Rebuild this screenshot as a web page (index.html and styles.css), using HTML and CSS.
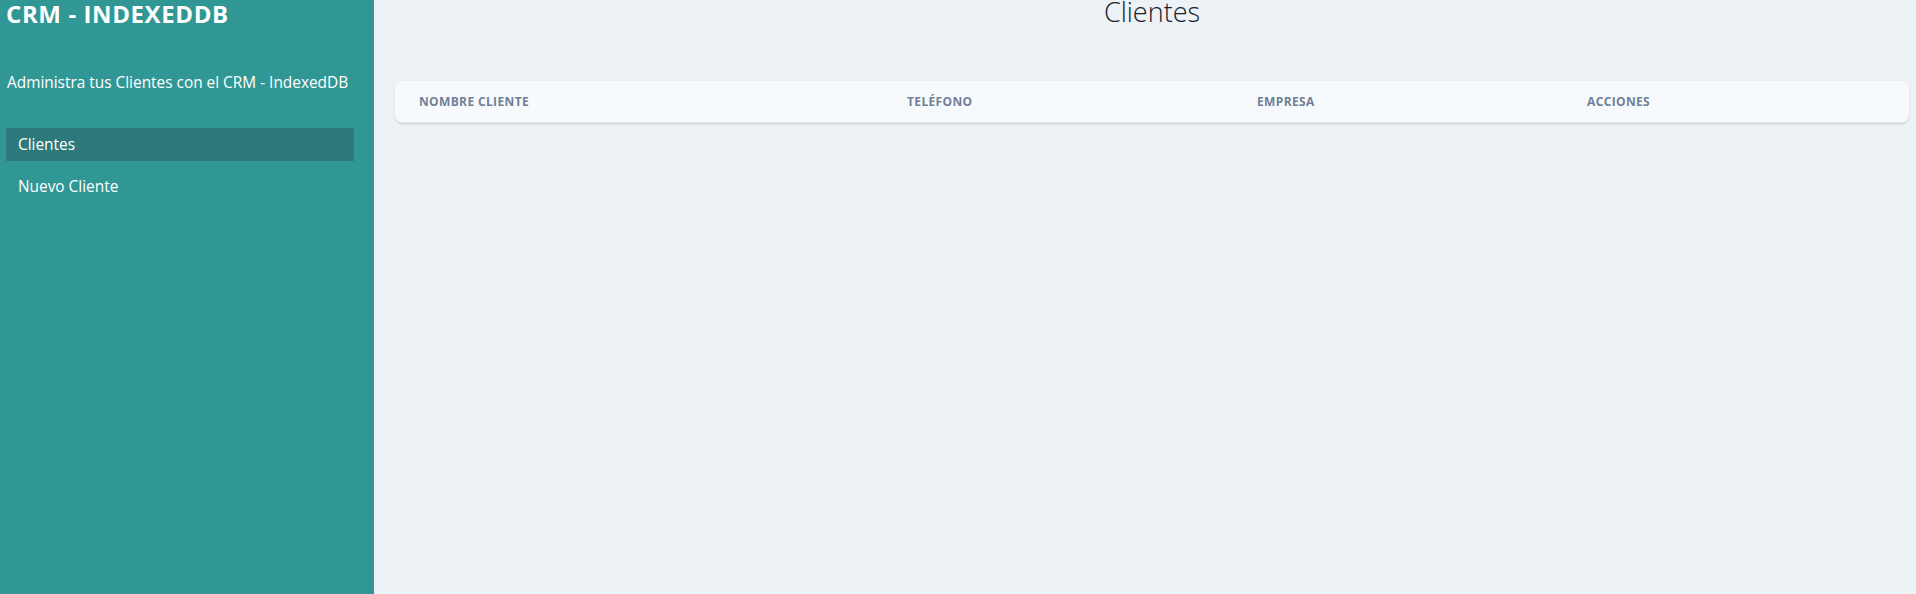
FILE: index.html
```html
<!DOCTYPE html>
<html lang="es">
<head>
<meta charset="utf-8">
<title>CRM - IndexedDB</title>
<link rel="stylesheet" href="styles.css">
</head>
<body>
<div class="layout">
  <aside class="sidebar">
    <h2 class="brand">CRM - IndexedDB</h2>
    <p class="tagline">Administra tus Clientes con el CRM - IndexedDB</p>
    <nav class="nav">
      <a href="#" class="nav-link active">Clientes</a>
      <a href="#" class="nav-link">Nuevo Cliente</a>
    </nav>
  </aside>
  <main class="main">
    <h2 class="page-title">Clientes</h2>
    <div class="table-card">
      <table class="table">
        <colgroup>
          <col class="col-name">
          <col class="col-phone">
          <col class="col-company">
          <col class="col-actions">
        </colgroup>
        <thead class="thead">
          <tr>
            <th class="th">Nombre Cliente</th>
            <th class="th">Teléfono</th>
            <th class="th">Empresa</th>
            <th class="th">Acciones</th>
          </tr>
        </thead>
        <tbody></tbody>
      </table>
    </div>
  </main>
</div>
</body>
</html>
```
FILE: styles.css
```css
* { box-sizing: border-box; }
html, body { margin: 0; padding: 0; }
body {
  font-family: "Open Sans", "Noto Sans", sans-serif;
  color: #1a202c;
  background: #edf2f7;
}
.layout {
  display: flex;
  min-height: 100vh;
}
.sidebar {
  width: 374px;
  flex: none;
  background: #319795;
  padding: 0 20px 0 6px;
}
.brand {
  margin: 0;
  font-size: 24px;
  line-height: 28px;
  font-weight: 700;
  text-transform: uppercase;
  letter-spacing: 0.025em;
  color: #fff;
}
.tagline {
  margin: 43px 0 0 1px;
  font-size: 15.4px;
  line-height: 24px;
  color: #fff;
}
.nav {
  margin-top: 33px;
  display: flex;
  flex-direction: column;
  gap: 9px;
}
.nav-link {
  display: block;
  padding: 5px 12px 4px;
  font-size: 15.4px;
  line-height: 24px;
  color: #fff;
  text-decoration: none;
}
.nav-link.active {
  background: #2c7a7b;
}
.main {
  flex: 1;
  background: #edf2f7;
  padding: 0 7px 0 21px;
}
.page-title {
  margin: 0;
  font-size: 27px;
  line-height: 24px;
  font-weight: 300;
  text-align: center;
  color: #1a202c;
}
.table-card {
  margin-top: 57px;
  background: #f7fafc;
  border-radius: 8px;
  overflow: hidden;
  border-bottom: 1px solid #e2e8f0;
  box-shadow: 0 1px 3px 0 rgba(0,0,0,0.1), 0 1px 2px 0 rgba(0,0,0,0.06);
}
.table {
  width: 100%;
  border-collapse: collapse;
  table-layout: fixed;
}
.col-name { width: 488px; }
.col-phone { width: 350px; }
.col-company { width: 330px; }
.col-actions { width: auto; }
.thead { background: #f7fafc; }
.th {
  padding: 12px 24px 12px 24px;
  text-align: left;
  font-size: 12px;
  line-height: 17px;
  font-weight: 700;
  text-transform: uppercase;
  letter-spacing: 0.03em;
  color: #718096;
}
```
